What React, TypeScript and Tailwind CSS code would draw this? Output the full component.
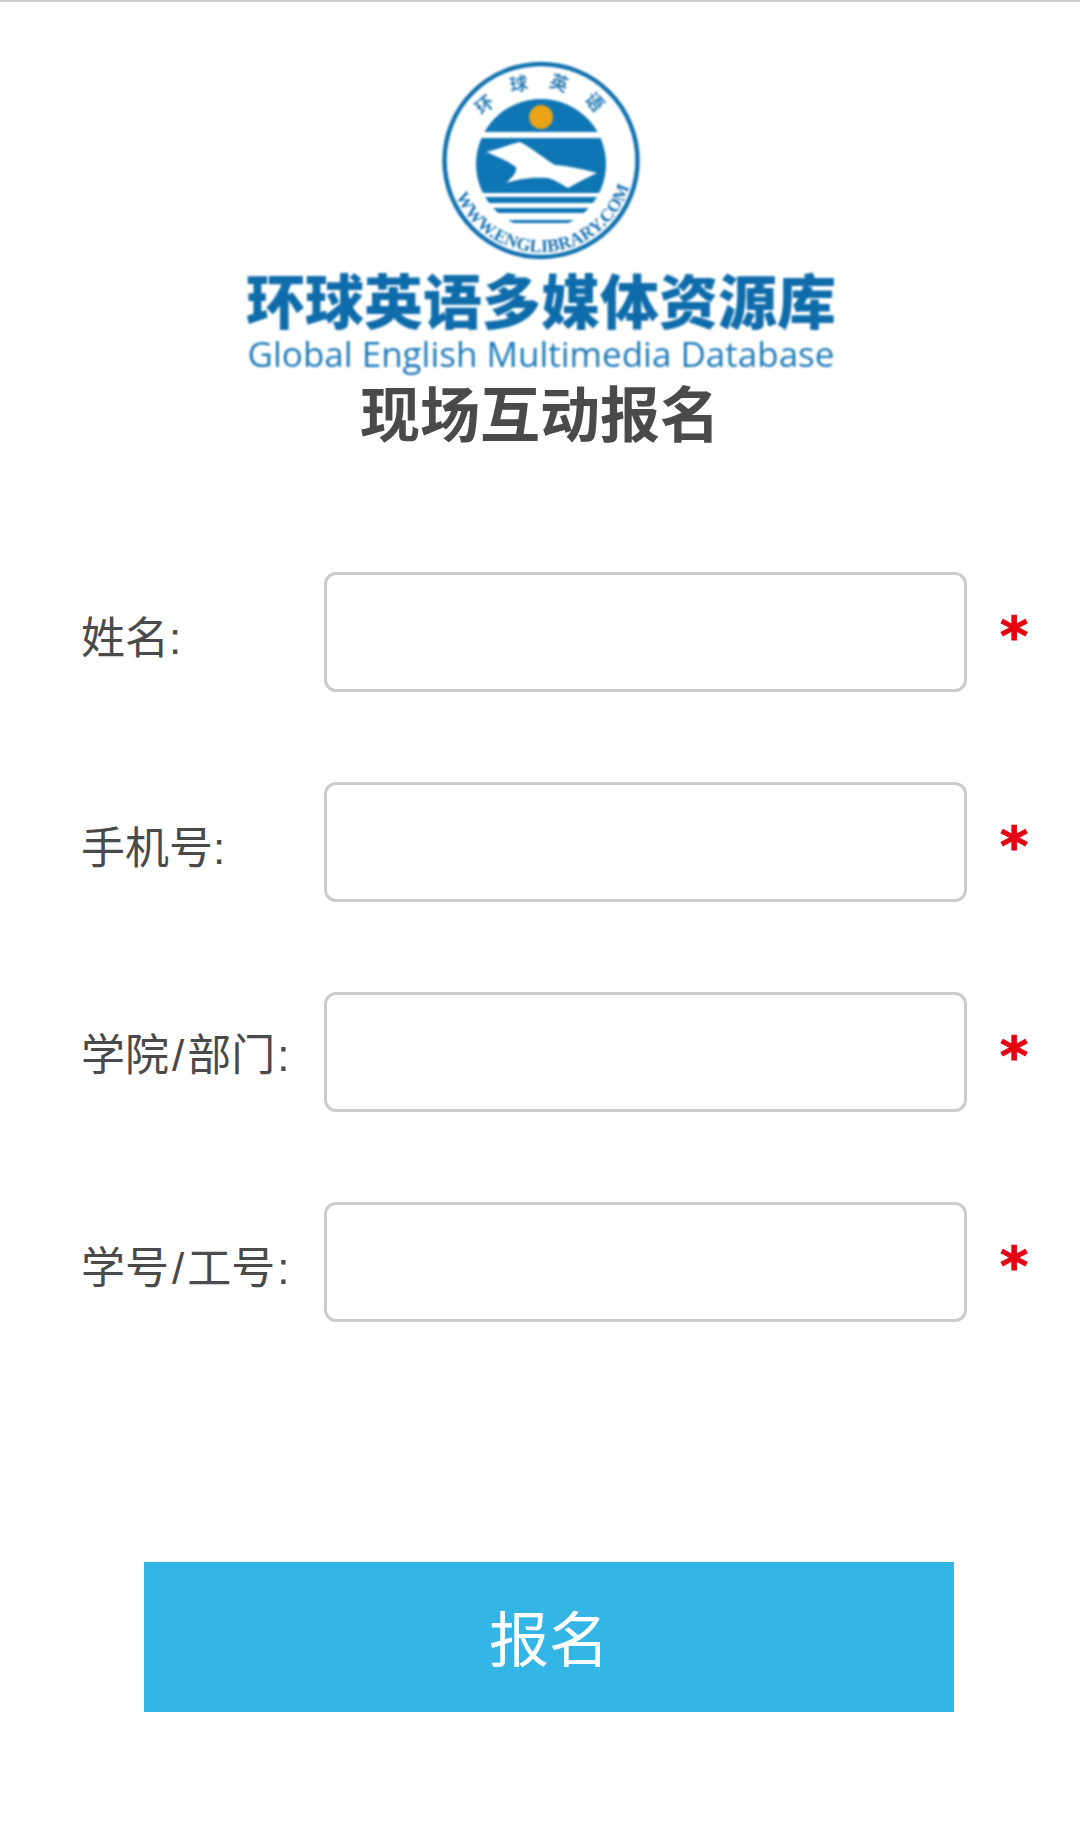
const sans = "font-['Liberation_Sans','Noto_Sans_CJK_SC',sans-serif]";

function Logo() {
  return (
    <svg width="610" height="330" viewBox="0 0 610 330" className="block blur-[0.8px]">
      <defs>
        <clipPath id="c">
          <circle cx="305" cy="104" r="65" />
        </clipPath>
        <path id="top" d="M 233 100 A 72 72 0 0 1 377 100" fill="none" />
        <path id="bot" d="M 213 100 A 92 92 0 0 0 397 100" fill="none" />
      </defs>
      <circle cx="305" cy="100.5" r="96.5" fill="#fff" stroke="#1272b0" strokeWidth="4.5" />
      <g clipPath="url(#c)">
        <rect x="240" y="30" width="130" height="42" fill="#0f76b5" />
        <rect x="240" y="78" width="130" height="55" fill="#0f76b5" />
        <rect x="240" y="137" width="130" height="6" fill="#0f76b5" />
        <rect x="240" y="148" width="130" height="5" fill="#0f76b5" />
        <rect x="240" y="160" width="130" height="3" fill="#0f76b5" />
      </g>
      <circle cx="305" cy="57" r="12" fill="#e8a317" />
      <path d="M250 92 C 262 89 272 85 284 82 C 296 88 310 100 319 105 C 332 106 347 109 361 113 C 350 118 341 123 332 128 C 325 124 318 119 311 118 C 298 117 285 118 270 123 C 277 117 281 112 280 107 C 275 103 263 97 250 92 Z" fill="#fff" />
      <text fontSize="18" fontWeight="700" fontFamily="'Noto Sans CJK SC',sans-serif" fill="#2f7fb5">
        <textPath href="#top" startOffset="53%" textAnchor="middle" letterSpacing="19">环球英语</textPath>
      </text>
      <g transform="rotate(-3 305 100)">
        <text fontSize="18" fontWeight="700" fontFamily="'Liberation Serif',serif" fill="#1f76b0">
          <textPath href="#bot" startOffset="50%" textAnchor="middle">WWW.ENGLIBRARY.COM</textPath>
        </text>
      </g>
      <text x="305" y="264" textAnchor="middle" fontSize="59" fontWeight="900" fontFamily="'Noto Sans CJK SC',sans-serif" fill="#0f6cab">环球英语多媒体资源库</text>
      <text x="305" y="307" textAnchor="middle" fontSize="35" fontFamily="'Open Sans',sans-serif" fill="#1c7ab8">Global English Multimedia Database</text>
    </svg>
  );
}

function Row({ label, labelPad = "pt-[14px]" }: { label: React.ReactNode; labelPad?: string }) {
  return (
    <div className="flex h-[120px] items-center">
      <label className={`w-[243px] pl-[81px] ${labelPad} box-content text-[44px] leading-none text-[#4a4a4a] whitespace-nowrap`}>{label}</label>
      <input className="h-[120px] w-[643px] rounded-[12px] border-[3px] border-[#cccccc] bg-white outline-none" />
      <span className="ml-[33px] pt-[10px] text-[54px] leading-none font-bold text-[#e60012] [-webkit-text-stroke:1px_#e60012] font-['DejaVu_Sans',sans-serif]">*</span>
    </div>
  );
}

export default function App() {
  return (
    <div className={`h-[1833px] w-[1080px] overflow-hidden bg-white border-t-2 border-[#cccccc] ${sans}`}>
      <div className="flex flex-col items-center pt-[58px] pl-[2px]">
        <Logo />
      </div>
      <h1 className="mt-[-8px] text-center text-[60px] leading-[70px] font-bold text-[#4a4a4a]">现场互动报名</h1>
      <div className="mt-[120px] flex flex-col gap-[90px] w-[1080px]">
        <Row label="姓名:" />
        <Row label="手机号:" />
        <Row labelPad="pt-[8px]" label={<>学院<span className="mx-[3px]">/</span>部门<span className="ml-[2px]">:</span></>} />
        <Row label={<>学号<span className="mx-[3px]">/</span>工号<span className="ml-[2px]">:</span></>} />
      </div>
      <div className="mt-[240px] ml-[144px]">
        <button className="h-[150px] w-[810px] bg-[#33b5e5] pt-[10px] text-[60px] text-white">报名</button>
      </div>
    </div>
  );
}
